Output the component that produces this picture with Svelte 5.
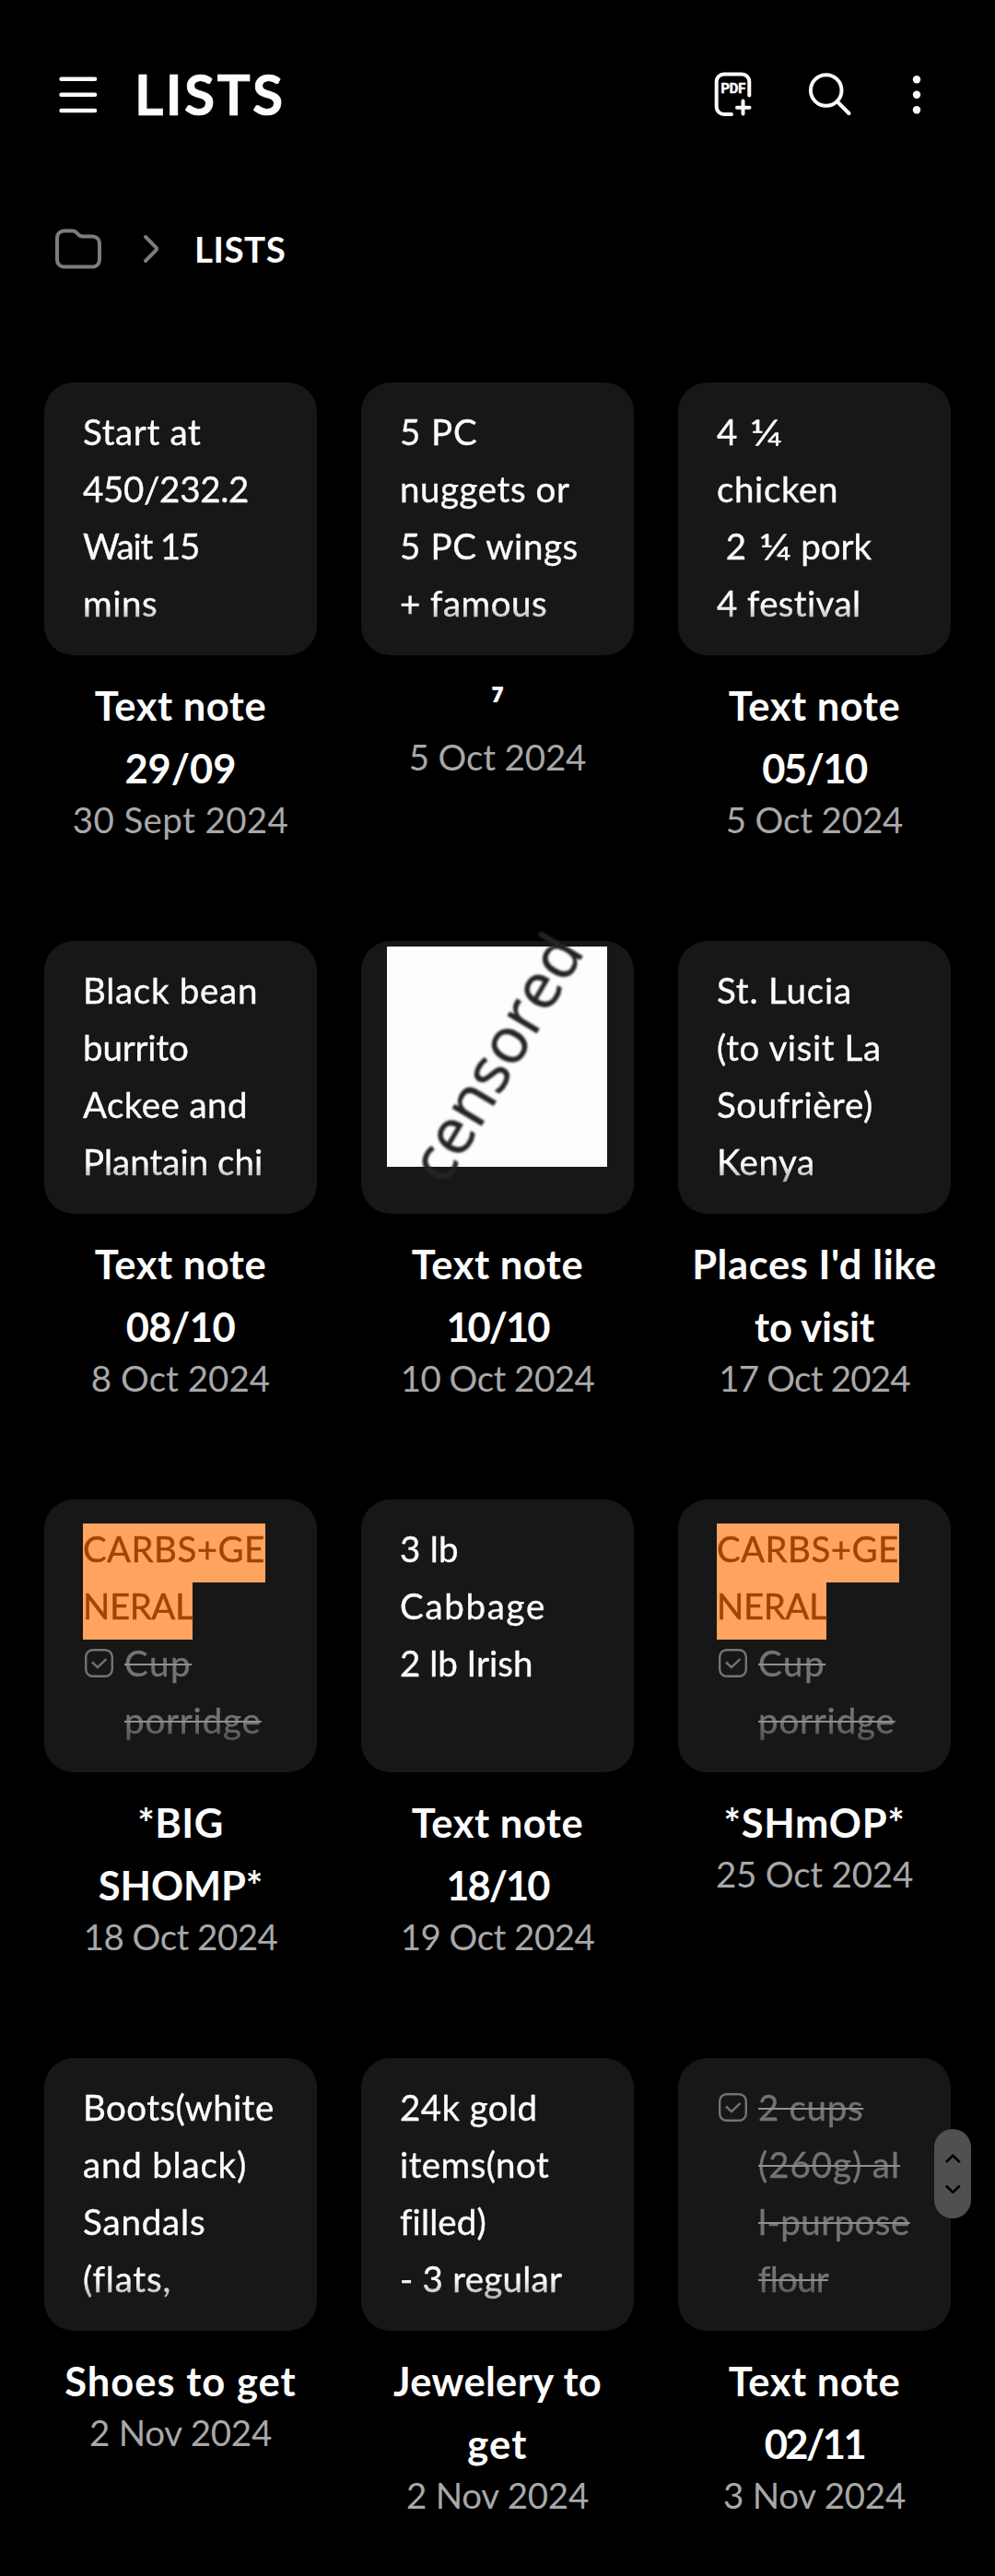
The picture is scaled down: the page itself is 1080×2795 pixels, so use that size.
<script>
  const notes = [
    { lines: [['Start at', 127], ['450/232.2', 179], ['Wait 15', 125], ['mins', 78]], title: [['Text note', 184.6], ['29/09', 118]], date: ['30 Sept 2024', 233] },
    { lines: [['5 PC', 81], ['nuggets or', 182], ['5 PC wings', 191.5], ['+ famous', 158]], title: [['⁷']], date: ['5 Oct 2024', 190.5] },
    { lines: [['4 ¼'], ['chicken', 128], [' 2 ¼ pork'], ['4 festival', 154]], title: [['Text note', 184.6], ['05/10', 114]], date: ['5 Oct 2024', 190.5] },
    { lines: [['Black bean', 184], ['burrito', 112], ['Ackee and', 176], ['Plantain chi', 191]], title: [['Text note', 184.6], ['08/10', 118]], date: ['8 Oct 2024', 193] },
    { stamp: 'censored', title: [['Text note', 184.6], ['10/10', 111]], date: ['10 Oct 2024', 208] },
    { lines: [['St. Lucia', 143], ['(to visit La', 176], ['Soufrière)', 167], ['Kenya', 101]], title: [["Places I'd like", 261], ['to visit', 131]], date: ['17 Oct 2024', 205] },
    { marked: [['CARBS+GE', 195], ['NERAL', 117]], done: [['Cup', 69], ['porridge', 144.6]], title: [['*BIG', 89.5], ['SHOMP*', 176]], date: ['18 Oct 2024', 208] },
    { lines: [['3 lb', 61], ['Cabbage', 155], ['2 lb Irish', 141]], title: [['Text note', 184.6], ['18/10', 111]], date: ['19 Oct 2024', 208] },
    { marked: [['CARBS+GE', 195], ['NERAL', 117]], done: [['Cup', 69], ['porridge', 144.6]], title: [['*SHmOP*', 193]], date: ['25 Oct 2024', 213] },
    { lines: [['Boots(white', 203], ['and black)', 175], ['Sandals', 131], ['(flats,', 92.5]], title: [['Shoes to get', 249.5]], date: ['2 Nov 2024', 198] },
    { lines: [['24k gold', 145.5], ['items(not', 160], ['filled)', 92.5], ['- 3 regular', 174]], title: [['Jewelery to', 226], ['get', 63]], date: ['2 Nov 2024', 198] },
    { done: [['2 cups', 112], ['(260g) al', 150], ['l-purpose', 161], ['flour', 76.7]], title: [['Text note', 184.6], ['02/11', 108]], date: ['3 Nov 2024', 198] }
  ];

  const pen = document.createElement('canvas').getContext('2d');

  // Tracks a line of text out to the given drawn width.
  function fit(node, width) {
    if (!width) return;
    const text = node.textContent;
    const style = getComputedStyle(node);
    pen.font = `${style.fontWeight} ${style.fontSize} ${style.fontFamily}`;
    pen.letterSpacing = '0.01px';
    const box = pen.measureText(text);
    const drawn = box.actualBoundingBoxRight + box.actualBoundingBoxLeft;
    node.style.letterSpacing = `${((width - drawn) / (text.length - 1)).toFixed(3)}px`;
  }
</script>

<div class="screen">
  <header>
    <svg width="42" height="42" viewBox="0 0 42 42">
      <path d="M2.6 3.7H39M2.6 20.7H39M2.6 38H39" stroke="#fcfcfc" stroke-width="4.6" stroke-linecap="round" />
    </svg>
    <h1 use:fit={155}>LISTS</h1>
    <div class="actions">
      <svg width="42" height="50" viewBox="0 0 42 50">
        <path d="M38.3 25.5V10.5a8 8 0 0 0-8-8H10.7a8 8 0 0 0-8 8v27.5a8 8 0 0 0 8 8H19M31.5 31.5v14M25 38.7h13.5" fill="none" stroke="#fcfcfc" stroke-width="4" stroke-linecap="round" />
        <text x="7.4" y="22.8" textLength="27" lengthAdjust="spacingAndGlyphs">PDF</text>
      </svg>
      <svg width="48" height="50" viewBox="0 0 48 50">
        <circle cx="19.7" cy="20" r="16.8" fill="none" stroke="#fcfcfc" stroke-width="4" />
        <path d="M32 32.5l12.5 12.5" stroke="#fcfcfc" stroke-width="4" stroke-linecap="round" />
      </svg>
      <svg width="10" height="50" viewBox="0 0 10 50">
        <circle cx="5" cy="8.3" r="4.2" fill="#fcfcfc" />
        <circle cx="5" cy="24.7" r="4.2" fill="#fcfcfc" />
        <circle cx="5" cy="41.2" r="4.2" fill="#fcfcfc" />
      </svg>
    </div>
  </header>

  <nav>
    <svg width="52" height="46" viewBox="0 0 52 46">
      <path d="M10.5 3.5h9q2.5 0 4.2 1.7l2.6 2.5q1.7 1.7 4.2 1.7H41.500a7.500 7.500 0 0 1 7.500 7.500V35a7.500 7.500 0 0 1-7.500 7.500H10.500A7.500 7.500 0 0 1 3 35V11A7.500 7.500 0 0 1 10.500 3.500z" fill="none" stroke="#7c7c7c" stroke-width="4" />
    </svg>
    <svg class="chev" width="20" height="34" viewBox="0 0 20 34">
      <path d="M4 4L15.2 15.3q1.6 1.7 0 3.4L4 30" fill="none" stroke="#7c7c7c" stroke-width="4" stroke-linecap="round" />
    </svg>
    <span use:fit={94.7}>LISTS</span>
  </nav>

  <main>
    {#each notes as note}
      <article>
        <div class="card">
          {#if note.stamp}
            <div class="photo"></div>
            <svg class="stamp" width="296" height="296" viewBox="0 0 296 296">
              <text transform="translate(91 267) rotate(-59.2)">{note.stamp}</text>
            </svg>
          {:else}
            <div class="preview">
              {#each note.marked ?? [] as [line, width]}
                <p><mark use:fit={width}>{line}</mark></p>
              {/each}
              {#each note.lines ?? [] as [line, width]}
                <p use:fit={width}>{#each line.split(/(¼)/) as part}<span class:fraction={part === '¼'}>{part}</span>{/each}</p>
              {/each}
              {#if note.done}
                <div class="task">
                  <svg width="31" height="31" viewBox="0 0 31 31">
                    <rect x="1.2" y="1.2" width="28.6" height="28.6" rx="7.5" />
                    <path d="M8 14.5l6 5.6L23.5 11" />
                  </svg>
                  <div>
                    {#each note.done as [line, width]}
                      <p><s use:fit={width}>{line}</s></p>
                    {/each}
                  </div>
                </div>
              {/if}
            </div>
          {/if}
        </div>
        <h2>
          {#each note.title as [line, width]}
            <span class:small={line === '⁷'} use:fit={width}>{line}</span>
          {/each}
        </h2>
        <time use:fit={note.date[1]}>{note.date[0]}</time>
      </article>
    {/each}
  </main>

  <div class="scroller">
    <svg width="40" height="97" viewBox="0 0 40 97">
      <path d="M12.8 36l7.5-7.2 7.5 7.2M12.8 61.5l7.5 7.2 7.5-7.2" fill="none" stroke="#000" stroke-width="2.6" />
    </svg>
  </div>
</div>

<style>
  :global(body) {
    background: #000;
  }
  .screen {
    position: relative;
    width: 1080px;
    height: 2795px;
    overflow: hidden;
    background: #000;
    color: #fcfcfc;
    font-family: Lato, 'Liberation Sans', sans-serif;
    font-variant-ligatures: none;
    font-size: 38.5px;
  }
  h1, h2, p {
    margin: 0;
    font-weight: 400;
  }
  svg {
    display: block;
    flex: none;
  }
  header {
    display: flex;
    align-items: center;
    height: 206px;
    padding: 0 80px 0 64px;
    box-sizing: border-box;
  }
  h1 {
    margin: -2px 0 0 40px;
    font-size: 60.5px;
    font-weight: 700;
    line-height: 80px;
    -webkit-text-stroke: 0.7px currentColor;
  }
  .actions {
    display: flex;
    margin-left: auto;
  }
  .actions svg:nth-child(2) {
    margin: 0 65px 0 60px;
  }
  .actions text {
    font: 700 15.5px Roboto, sans-serif;
    fill: #fcfcfc;
    stroke: #fcfcfc;
    stroke-width: 0.6px;
  }
  nav {
    display: flex;
    align-items: center;
    height: 128px;
    padding-left: 59px;
  }
  .chev {
    margin: 0 37px 0 43px;
  }
  nav span {
    font-weight: 700;
    font-size: 38.5px;
  }
  main {
    display: grid;
    grid-template-columns: repeat(3, 296px);
    grid-auto-rows: 606px;
    column-gap: 48px;
    padding: 81px 48px 0;
  }
  article {
    display: flex;
    flex-direction: column;
    text-align: center;
  }
  .card {
    position: relative;
    height: 296px;
    flex: none;
    border-radius: 32px;
    background: #171717;
    text-align: left;
  }
  .preview {
    height: 296px;
    box-sizing: border-box;
    padding: 22px 0 0 42px;
    mask-image: linear-gradient(#000 241px, transparent 298px);
  }
  .preview p {
    line-height: 62px;
    height: 62px;
    white-space: pre;
    -webkit-text-stroke: 0.35px currentColor;
  }
  .preview mark, .preview s {
    -webkit-text-stroke: 0.35px currentColor;
  }
  .fraction {
    display: inline-block;
    margin: 0 7px 0 4px;
    line-height: 1;
    transform: scaleX(1.25);
    transform-origin: left;
  }
  mark {
    padding: 4px 0 14px;
    background: #ffa45f;
    color: #a24400;
  }
  .task {
    display: flex;
    color: #737373;
  }
  .task svg {
    margin: 16px 12px 0 2px;
    fill: none;
    stroke: #737373;
    stroke-width: 2.4;
  }
  s {
    text-decoration: line-through 2px #909090;
  }
  .photo {
    width: 239px;
    height: 239px;
    margin-left: 28px;
    background: #fdfdfd;
    position: relative;
    top: 6px;
  }
  .stamp {
    position: absolute;
    inset: 0;
    overflow: visible;
  }
  .stamp text {
    font: 400 69px 'Open Sans', sans-serif;
    fill: #242424;
    stroke: #242424;
    stroke-width: 0.6px;
    filter: blur(0.9px);
  }
  h2 {
    margin-top: 20px;
    font-size: 43.5px;
    font-weight: 700;
    line-height: 68px;
  }
  h2 span {
    display: block;
    white-space: nowrap;
  }
  h2 .small {
    font-weight: 900;
  }
  time {
    margin-top: -3px;
    line-height: 50px;
    color: #a8a8a8;
  }
  .scroller {
    position: absolute;
    left: 1014px;
    top: 2310px;
    width: 40px;
    height: 97px;
    border-radius: 20px;
    background: #505052;
  }
</style>
